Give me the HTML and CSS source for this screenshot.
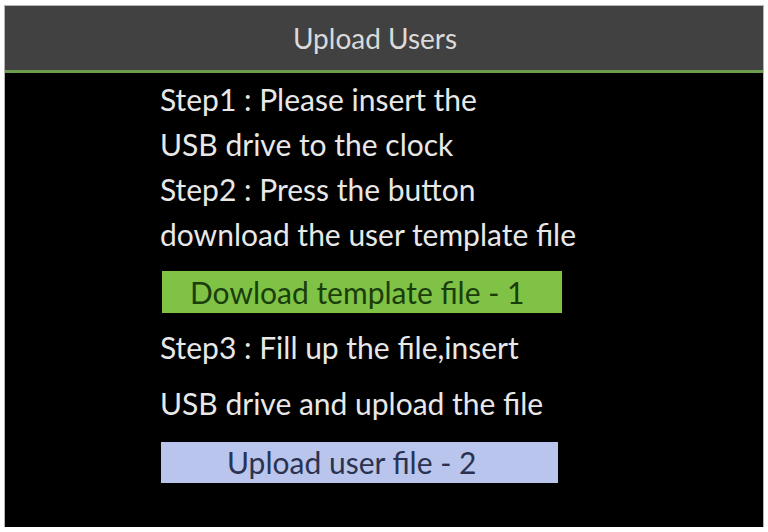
FILE: index.html
```html
<!DOCTYPE html>
<html lang="en">
<head>
    <meta charset="UTF-8">
    <meta name="viewport" content="width=device-width, initial-scale=1.0">
    <title>Upload Users</title>
    <link rel="stylesheet" href="styles.css">
</head>
<body>
    <div class="screen">
        <div class="header">Upload Users</div>
        <div class="content">
            <div class="steps">
                <p>Step1 : Please insert the</p>
                <p>USB drive to the clock</p>
                <p>Step2 : Press the button</p>
                <p>download the user template file</p>
            </div>
            <button class="btn btn-download">Dowload template file - 1</button>
            <div class="steps steps-wide">
                <p>Step3 : Fill up the file,insert</p>
                <p>USB drive and upload the file</p>
            </div>
            <button class="btn btn-upload">Upload user file - 2</button>
        </div>
    </div>
</body>
</html>
```

FILE: styles.css
```css
body {
    margin: 0;
    padding: 0;
    background-color: #fff;
    font-family: Lato, "Open Sans", sans-serif;
}
.screen {
    width: 758px;
    height: 521px;
    margin: 6px 5px 0 5px;
    background: #000;
    box-shadow: 0 0 0 1px #b5b5b5;
}
.header {
    height: 64px;
    padding-right: 18px;
    background: #414141;
    color: #dadada;
    font-size: 28px;
    display: flex;
    align-items: center;
    justify-content: center;
    border-bottom: 3px solid #6c9c4c;
}
.content {
    padding: 4px 0 0 155px;
    color: #e8e8e8;
}
.steps p {
    margin: 0;
    font-size: 30px;
    line-height: 45px;
}
.steps-wide {
    margin-top: 6px;
}
.steps-wide p {
    line-height: 56px;
}
.btn {
    display: block;
    border: none;
    border-radius: 0;
    font-family: inherit;
    font-size: 30px;
    text-align: left;
    box-sizing: border-box;
    padding: 0;
}
.btn-download {
    width: 400px;
    height: 42px;
    line-height: 42px;
    margin: 14px 0 0 2px;
    padding-left: 28px;
    background: #7fc245;
    color: #1a3d0c;
}
.btn-upload {
    width: 397px;
    height: 41px;
    line-height: 41px;
    margin: 11px 0 0 1px;
    padding-left: 66px;
    background: #b9c5ec;
    color: #2b3250;
}
```
